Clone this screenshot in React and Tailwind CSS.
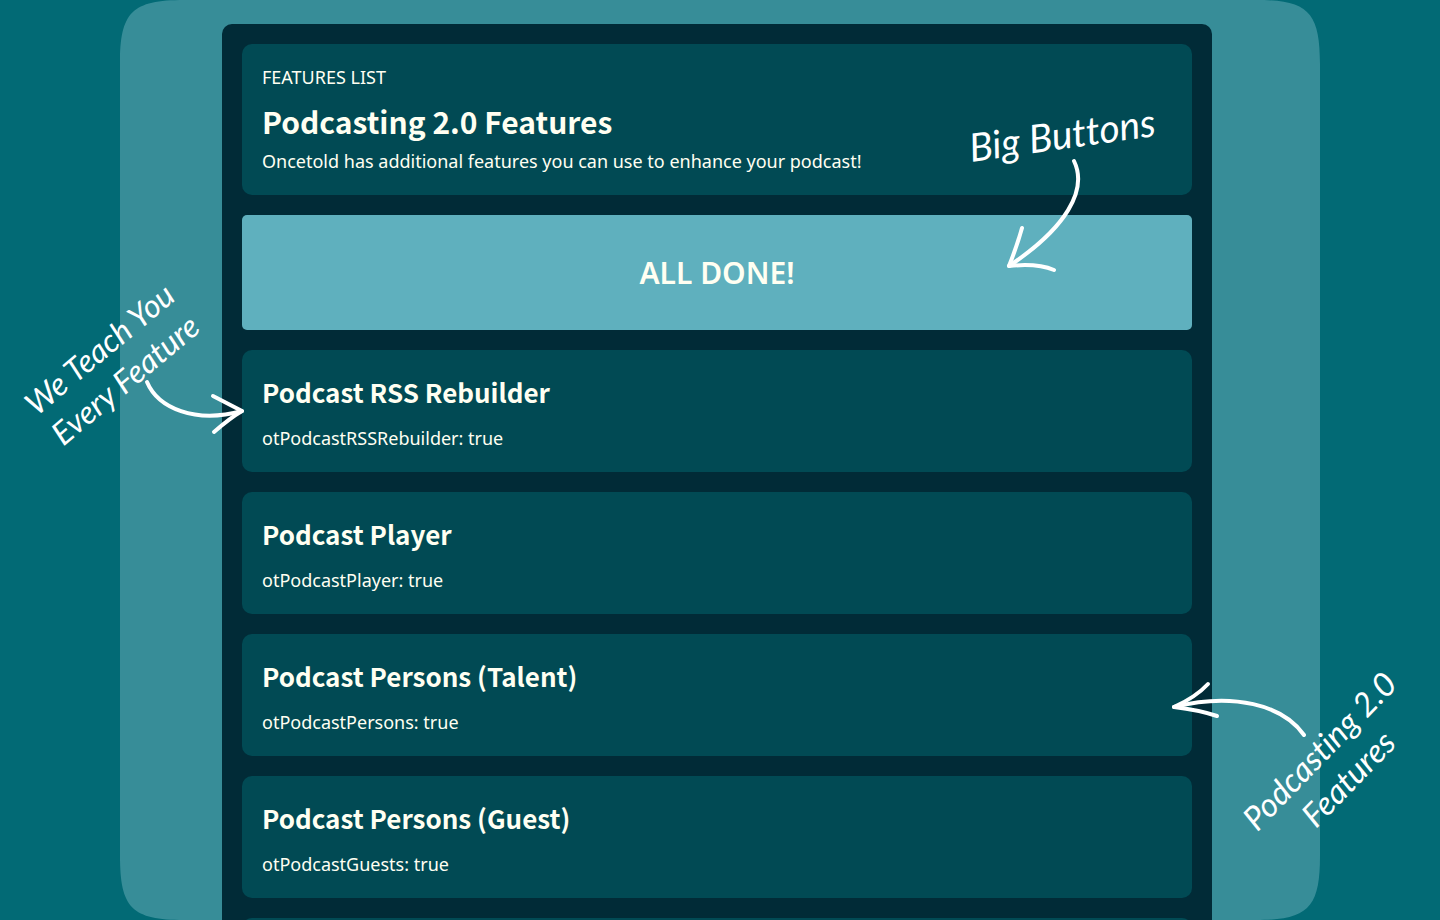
import React from 'react';

const features = [
  { title: 'Podcast RSS Rebuilder', key: 'otPodcastRSSRebuilder' },
  { title: 'Podcast Player', key: 'otPodcastPlayer' },
  { title: 'Podcast Persons (Talent)', key: 'otPodcastPersons' },
  { title: 'Podcast Persons (Guest)', key: 'otPodcastGuests' },
];

function FeatureCard({ title, name }) {
  return (
    <article className="flex flex-col gap-3 rounded-[10px] bg-[#014a54] p-5">
      <h2 className="font-['Noto_Sans_CJK_JP','Noto_Sans',sans-serif] text-[26px] leading-[43px] font-bold">
        {title}
      </h2>
      <p className="text-lg leading-[27px]">{name}: true</p>
    </article>
  );
}

// handwritten note laid over the page
function Note({ className, children }) {
  return (
    <p
      className={`pointer-events-none absolute w-[240px] text-center font-['Ink_Free','Lato',sans-serif] leading-10 whitespace-nowrap text-white italic [font-variant-ligatures:none] ${className}`}
    >
      {children}
    </p>
  );
}

// page-coloured cut-out that gives the backdrop its squircle corners
function Corner({ className }) {
  return (
    <svg className={`absolute size-16 ${className}`} viewBox="0 0 64 64" fill="#026a75" aria-hidden="true">
      <path d="M0 64C0 12 12 0 64 0H0Z" />
    </svg>
  );
}

function Arrow({ className, viewBox, children }) {
  return (
    <svg
      className={`pointer-events-none absolute ${className}`}
      viewBox={viewBox}
      fill="none"
      stroke="#fff"
      strokeWidth="4"
      strokeLinecap="round"
      strokeLinejoin="round"
      aria-hidden="true"
    >
      {children}
    </svg>
  );
}

export default function App() {
  return (
    <div className="h-screen overflow-hidden bg-[#026a75] font-['Noto_Sans',sans-serif] text-[#fffff2]">
      <div className="relative mx-auto h-full w-5/6 bg-[#378d98] pt-6 pr-[108px] pl-[102px]">
        <Corner className="top-0 left-0" />
        <Corner className="top-0 right-0 rotate-90" />
        <Corner className="right-0 bottom-0 rotate-180" />
        <Corner className="bottom-0 left-0 -rotate-90" />

        <main className="flex flex-col gap-5 rounded-[10px] bg-[#012b37] p-5">
          <header className="flex flex-col rounded-[10px] bg-[#014a54] p-5">
            <p className="text-lg leading-[27px]">FEATURES LIST</p>
            <h1 className="pt-1 font-['Noto_Sans_CJK_JP','Noto_Sans',sans-serif] text-[30px] leading-[53px] font-bold">
              Podcasting 2.0 Features
            </h1>
            <p className="text-lg leading-[27px]">
              Oncetold has additional features you can use to enhance your podcast!
            </p>
          </header>

          <button type="button" className="rounded-[5px] bg-[#5fb0be] py-9 text-[30px] leading-[43px] font-semibold">
            ALL DONE!
          </button>

          {features.map((f) => (
            <FeatureCard key={f.key} title={f.title} name={f.key} />
          ))}
          <article className="rounded-[10px] bg-[#014a54] p-5" />
        </main>

        <Note className="top-[114px] right-[138px] -rotate-8 text-[39px]">Big Buttons</Note>
        <Arrow className="top-[150px] right-[230px] h-[130px] w-[90px]" viewBox="1000 150 90 130">
          <path d="M1074 161C1088 190 1066 228 1009 266" />
          <path d="M1022 228Q1017 246 1009 266Q1037 263 1054 270" />
        </Arrow>

        <Note className="top-[324px] left-[-128px] -rotate-40 text-[32px]">
          We Teach You
          <br />
          Every Feature
        </Note>
        <Arrow className="top-[370px] left-5 h-[70px] w-[110px]" viewBox="140 370 110 70">
          <path d="M147 382C158 408 195 424 242 411" />
          <path d="M213 396L242 411Q230 418 214 432" />
        </Arrow>

        <Note className="top-[724px] right-[-133px] -rotate-46 text-[33px]">
          Podcasting 2.0
          <br />
          Features
        </Note>
        <Arrow className="top-[675px] right-[5px] h-[70px] w-[150px]" viewBox="1165 675 150 70">
          <path d="M1304 735C1283 705 1233 692 1174 707" />
          <path d="M1208 684Q1196 697 1174 707Q1199 710 1217 716" />
        </Arrow>
      </div>
    </div>
  );
}
